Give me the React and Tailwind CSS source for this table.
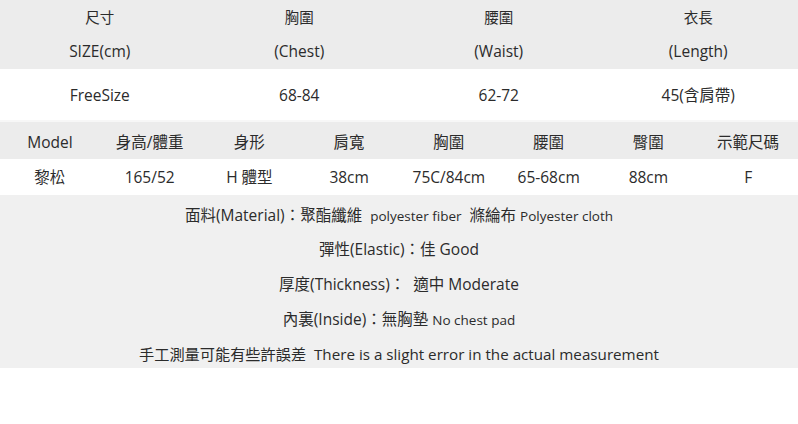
const sizeHead = [
  ["尺寸", "SIZE(cm)"],
  ["胸圍", "(Chest)"],
  ["腰圍", "(Waist)"],
  ["衣長", "(Length)"],
];
const sizeRow = ["FreeSize", "68-84", "62-72", "45(含肩帶)"];

const modelHead = ["Model", "身高/體重", "身形", "肩寬", "胸圍", "腰圍", "臀圍", "示範尺碼"];
const modelRow = ["黎松", "165/52", "H 體型", "38cm", "75C/84cm", "65-68cm", "88cm", "F"];

export default function App() {
  return (
    <div className="w-[798px] h-[424px] bg-white text-[#2b2b2b] font-['Open_Sans','Noto_Sans_CJK_TC',sans-serif]">
      {/* size table */}
      <div className="grid grid-cols-4 bg-[#ececec]">
        {sizeHead.map(([zh, en]) => (
          <div key={en} className="flex flex-col items-center">
            <div className="h-[35px] flex items-center text-[14.5px]">{zh}</div>
            <div className="h-[34px] flex items-center text-[15.5px]">{en}</div>
          </div>
        ))}
      </div>
      <div className="grid grid-cols-4 h-[53px] border-b-2 border-[#f7f7f7]">
        {sizeRow.map((v) => (
          <div key={v} className="flex items-center justify-center text-[15.5px] pt-[3px]">{v}</div>
        ))}
      </div>

      {/* model table */}
      <div className="grid grid-cols-8 h-[37px] bg-[#ececec]">
        {modelHead.map((v) => (
          <div key={v} className="flex items-center justify-center text-[15.5px] pt-[5px]">{v}</div>
        ))}
      </div>
      <div className="grid grid-cols-8 h-[36px]">
        {modelRow.map((v) => (
          <div key={v} className="flex items-center justify-center text-[15.5px] pt-[2px]">{v}</div>
        ))}
      </div>

      {/* notes */}
      <div className="bg-[#f0f0f0] h-[173px] flex flex-col items-center pt-[3px] text-[15.5px]">
        <p className="h-[34px] leading-[34px]">
          面料(Material)：聚酯纖維&nbsp;&nbsp;<span className="text-[13.5px]">polyester fiber</span>&nbsp;&nbsp;滌綸布&nbsp;<span className="text-[13.5px]">Polyester cloth</span>
        </p>
        <p className="h-[35px] leading-[35px]">彈性(Elastic)：佳 Good</p>
        <p className="h-[35px] leading-[35px]">厚度(Thickness)：&nbsp;&nbsp;適中 Moderate</p>
        <p className="h-[35px] leading-[35px]">
          內裏(Inside)：無胸墊&nbsp;<span className="text-[13.5px]">No chest pad</span>
        </p>
        <p className="h-[34px] leading-[34px] text-[15.2px]">手工測量可能有些許誤差&nbsp;&nbsp;There is a slight error in the actual measurement</p>
      </div>
    </div>
  );
}
